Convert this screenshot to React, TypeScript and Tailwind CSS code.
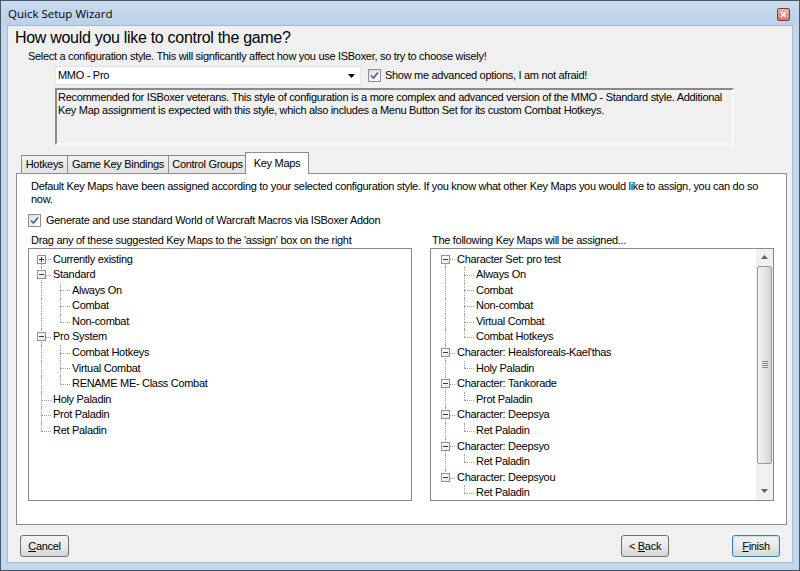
import React from "react";

type Node = { label: string; children?: Node[]; collapsed?: boolean };

const leftTree: Node[] = [
  { label: "Currently existing", children: [], collapsed: true },
  { label: "Standard", children: [{ label: "Always On" }, { label: "Combat" }, { label: "Non-combat" }] },
  {
    label: "Pro System",
    children: [{ label: "Combat Hotkeys" }, { label: "Virtual Combat" }, { label: "RENAME ME- Class Combat" }],
  },
  { label: "Holy Paladin" },
  { label: "Prot Paladin" },
  { label: "Ret Paladin" },
];

const rightTree: Node[] = [
  {
    label: "Character Set: pro test",
    children: [
      { label: "Always On" },
      { label: "Combat" },
      { label: "Non-combat" },
      { label: "Virtual Combat" },
      { label: "Combat Hotkeys" },
    ],
  },
  { label: "Character: Healsforeals-Kael'thas", children: [{ label: "Holy Paladin" }] },
  { label: "Character: Tankorade", children: [{ label: "Prot Paladin" }] },
  { label: "Character: Deepsya", children: [{ label: "Ret Paladin" }] },
  { label: "Character: Deepsyo", children: [{ label: "Ret Paladin" }] },
  { label: "Character: Deepsyou", children: [{ label: "Ret Paladin" }] },
];

type Row = { node: Node; depth: number; first: boolean; last: boolean; trail: boolean[] };

function flatten(nodes: Node[], depth = 0, trail: boolean[] = []): Row[] {
  const rows: Row[] = [];
  nodes.forEach((n, i) => {
    const last = i === nodes.length - 1;
    rows.push({ node: n, depth, first: depth === 0 && i === 0, last, trail });
    if (n.children && n.children.length && !n.collapsed) {
      rows.push(...flatten(n.children, depth + 1, [...trail, !last]));
    }
  });
  return rows;
}

function TreeRow({ row }: { row: Row }) {
  const hasKids = row.node.children !== undefined;
  return (
    <div className="flex h-[15.6px] shrink-0">
      {row.trail.map((cont, i) => (
        <span key={i} className="relative w-[19px] shrink-0">
          {cont && <span className="absolute left-[9px] top-0 bottom-0 border-l border-dotted border-[#a0a0a0]" />}
        </span>
      ))}
      <span className="relative w-[19px] shrink-0">
        {!row.first && <span className="absolute left-[9px] top-0 h-1/2 border-l border-dotted border-[#a0a0a0]" />}
        {!row.last && <span className="absolute left-[9px] top-1/2 bottom-0 border-l border-dotted border-[#a0a0a0]" />}
        <span className="absolute left-[9px] right-0 top-1/2 border-t border-dotted border-[#a0a0a0]" />
        {hasKids && (
          <span className="absolute left-[5px] top-[3px] w-[9px] h-[9px] border border-[#919191] bg-gradient-to-br from-white to-[#e6e6e6]">
            <span className="absolute left-[1px] right-[1px] top-[3px] h-px bg-[#3c3c3c]" />
            {row.node.collapsed && <span className="absolute top-[1px] bottom-[1px] left-[3px] w-px bg-[#3c3c3c]" />}
          </span>
        )}
      </span>
      <span className="pl-[2px] leading-[15.6px] whitespace-nowrap">{row.node.label}</span>
    </div>
  );
}

function CheckBox() {
  return (
    <span className="w-[13px] h-[13px] border border-[#8e8f8f] bg-gradient-to-br from-[#dcdcdc] to-white flex items-center justify-center shrink-0">
      <svg width="9" height="9" viewBox="0 0 9 9">
        <path d="M1 4.5 L3.5 7 L8 1.5" fill="none" stroke="#4a5f97" strokeWidth="1.6" />
      </svg>
    </span>
  );
}

function Tab({ label, active, w }: { label: string; active?: boolean; w: string }) {
  if (active) {
    return (
      <div className={`${w} h-[22px] -mb-px -ml-[2px] bg-white border border-b-0 border-[#898c95] flex items-center justify-center relative z-10`}>
        {label}
      </div>
    );
  }
  return (
    <div className={`${w} h-[18px] bg-gradient-to-b from-[#f2f2f2] to-[#e3e3e3] border border-b-0 border-[#898c95] -ml-px first:ml-0 flex items-center justify-center`}>
      {label}
    </div>
  );
}

function Button({ children, def, w }: { children: React.ReactNode; def?: boolean; w: string }) {
  return (
    <div
      className={`${w} h-[22px] rounded-[3px] border ${def ? "border-[#3c7fb1] shadow-[inset_0_0_0_1px_#b7e3fa]" : "border-[#707070]"} bg-gradient-to-b from-[#f2f2f2] via-[#ebebeb] to-[#d4d4d4] flex items-center justify-center`}
    >
      {children}
    </div>
  );
}

export default function App() {
  const left = flatten(leftTree);
  const right = flatten(rightTree);
  return (
    <div className="w-[800px] h-[571px] bg-[#c2d7ee] border border-[#4c5563] flex flex-col font-['Liberation_Sans',sans-serif] text-[11px] tracking-[-0.3px] text-black overflow-hidden">
      {/* title bar */}
      <div className="h-[24px] shrink-0 flex items-center justify-between pl-[7px] pr-[9px] bg-gradient-to-b from-[#c9dcf1] to-[#b9d1ea]">
        <span className="text-[11.5px] tracking-normal font-['Open_Sans',sans-serif] pt-[2px]">Quick Setup Wizard</span>
        <span className="w-[13px] h-[13px] mt-[3px] rounded-[2px] border border-[#8a3c36] bg-gradient-to-b from-[#e6b2aa] to-[#cf7e74] flex items-center justify-center">
          <svg width="7" height="7" viewBox="0 0 7 7">
            <path d="M1 1 L6 6 M6 1 L1 6" stroke="white" strokeWidth="1.6" />
          </svg>
        </span>
      </div>

      {/* client */}
      <div className="mx-[6px] h-[538px] shrink-0 bg-[#f0f0f0] border border-[#a5b9d0] flex flex-col">
        <div className="pl-[7px] pt-[1px] text-[16px] leading-[21px] whitespace-nowrap">How would you like to control the game?</div>
        <div className="pl-[20px] pt-[2px] leading-[13px] whitespace-nowrap">
          Select a configuration style. This will signficantly affect how you use ISBoxer, so try to choose wisely!
        </div>
        <div className="pl-[47px] pt-[3px] flex items-center">
          <div className="w-[306px] h-[19px] bg-white border border-[#e2e2e2] flex items-center justify-between pl-[2px] pr-[5px]">
            <span>MMO - Pro</span>
            <svg width="7" height="4" viewBox="0 0 7 4">
              <path d="M0 0 H7 L3.5 4 Z" fill="#000" />
            </svg>
          </div>
          <div className="ml-[7px] flex items-center gap-[4px]">
            <CheckBox />
            <span className="whitespace-nowrap">Show me advanced options, I am not afraid!</span>
          </div>
        </div>
        <div className="ml-[47px] mt-[3px] w-[679px] h-[57px] border-2 border-t-[#8a8a8a] border-l-[#8a8a8a] border-b-[#fafafa] border-r-[#fafafa] pl-[1px] pt-[1px] leading-[13px] whitespace-nowrap">
          Recommended for ISBoxer veterans. This style of configuration is a more complex and advanced version of the MMO - Standard style. Additional
          <br />
          Key Map assignment is expected with this style, which also includes a Menu Button Set for its custom Combat Hotkeys.
        </div>

        {/* tabs */}
        <div className="mt-[6px] ml-[8px] w-[771px]">
          <div className="flex items-end pl-[5px] h-[22px]">
            <Tab label="Hotkeys" w="w-[47px]" />
            <Tab label="Game Key Bindings" w="w-[102px]" />
            <Tab label="Control Groups" w="w-[79px]" />
            <Tab label="Key Maps" w="w-[64px]" active />
          </div>
          <div className="h-[352px] bg-white border border-[#898c95] flex flex-col">
            <div className="pl-[14px] pt-[6px] leading-[13px] whitespace-nowrap">
              Default Key Maps have been assigned according to your selected configuration style. If you know what other Key Maps you would like to assign, you can do so
              <br />
              now.
            </div>
            <div className="pl-[11px] mt-[6px] flex items-center gap-[5px]">
              <CheckBox />
              <span className="whitespace-nowrap">Generate and use standard World of Warcraft Macros via ISBoxer Addon</span>
            </div>
            <div className="flex pl-[11px] gap-[18px] mt-[5px]">
              <div className="w-[384px] flex flex-col">
                <div className="pl-[3px] leading-[13px] h-[14px] whitespace-nowrap">Drag any of these suggested Key Maps to the 'assign' box on the right</div>
                <div className="h-[253px] border border-[#828790] bg-white pl-[3px] pt-[3px] flex flex-col overflow-hidden">
                  {left.map((r, i) => (
                    <TreeRow key={i} row={r} />
                  ))}
                </div>
              </div>
              <div className="w-[344px] flex flex-col">
                <div className="pl-[2px] leading-[13px] h-[14px] whitespace-nowrap">The following Key Maps will be assigned...</div>
                <div className="h-[253px] border border-[#828790] bg-white flex overflow-hidden">
                  <div className="flex-1 pl-[5px] pt-[3px] flex flex-col overflow-hidden">
                    {right.map((r, i) => (
                      <TreeRow key={i} row={r} />
                    ))}
                  </div>
                  {/* scrollbar */}
                  <div className="w-[17px] bg-[#f0f0f0] flex flex-col shrink-0">
                    <div className="h-[17px] flex items-center justify-center">
                      <svg width="7" height="4" viewBox="0 0 7 4">
                        <path d="M0 4 H7 L3.5 0 Z" fill="#606060" />
                      </svg>
                    </div>
                    <div className="h-[198px] mx-[1px] rounded-[2px] border border-[#9a9a9a] bg-gradient-to-r from-[#f2f2f2] via-[#e5e5e5] to-[#d2d2d2] flex items-center justify-center">
                      <div className="flex flex-col gap-[1px]">
                        <span className="w-[6px] h-px bg-[#8a8a8a]" />
                        <span className="w-[6px] h-px bg-[#8a8a8a]" />
                        <span className="w-[6px] h-px bg-[#8a8a8a]" />
                        <span className="w-[6px] h-px bg-[#8a8a8a]" />
                      </div>
                    </div>
                    <div className="flex-1" />
                    <div className="h-[17px] flex items-center justify-center">
                      <svg width="7" height="4" viewBox="0 0 7 4">
                        <path d="M0 0 H7 L3.5 4 Z" fill="#606060" />
                      </svg>
                    </div>
                  </div>
                </div>
              </div>
            </div>
          </div>
        </div>

        {/* buttons */}
        <div className="mt-[10px] flex items-center px-[12px]">
          <Button w="w-[49px]">
            <span>
              <span className="underline">C</span>ancel
            </span>
          </Button>
          <div className="flex-1" />
          <Button w="w-[48px]">
            <span>
              &lt; <span className="underline">B</span>ack
            </span>
          </Button>
          <div className="w-[63px]" />
          <Button w="w-[48px]" def>
            <span>
              <span className="underline">F</span>inish
            </span>
          </Button>
        </div>
      </div>
      <div className="flex-1" />
    </div>
  );
}
